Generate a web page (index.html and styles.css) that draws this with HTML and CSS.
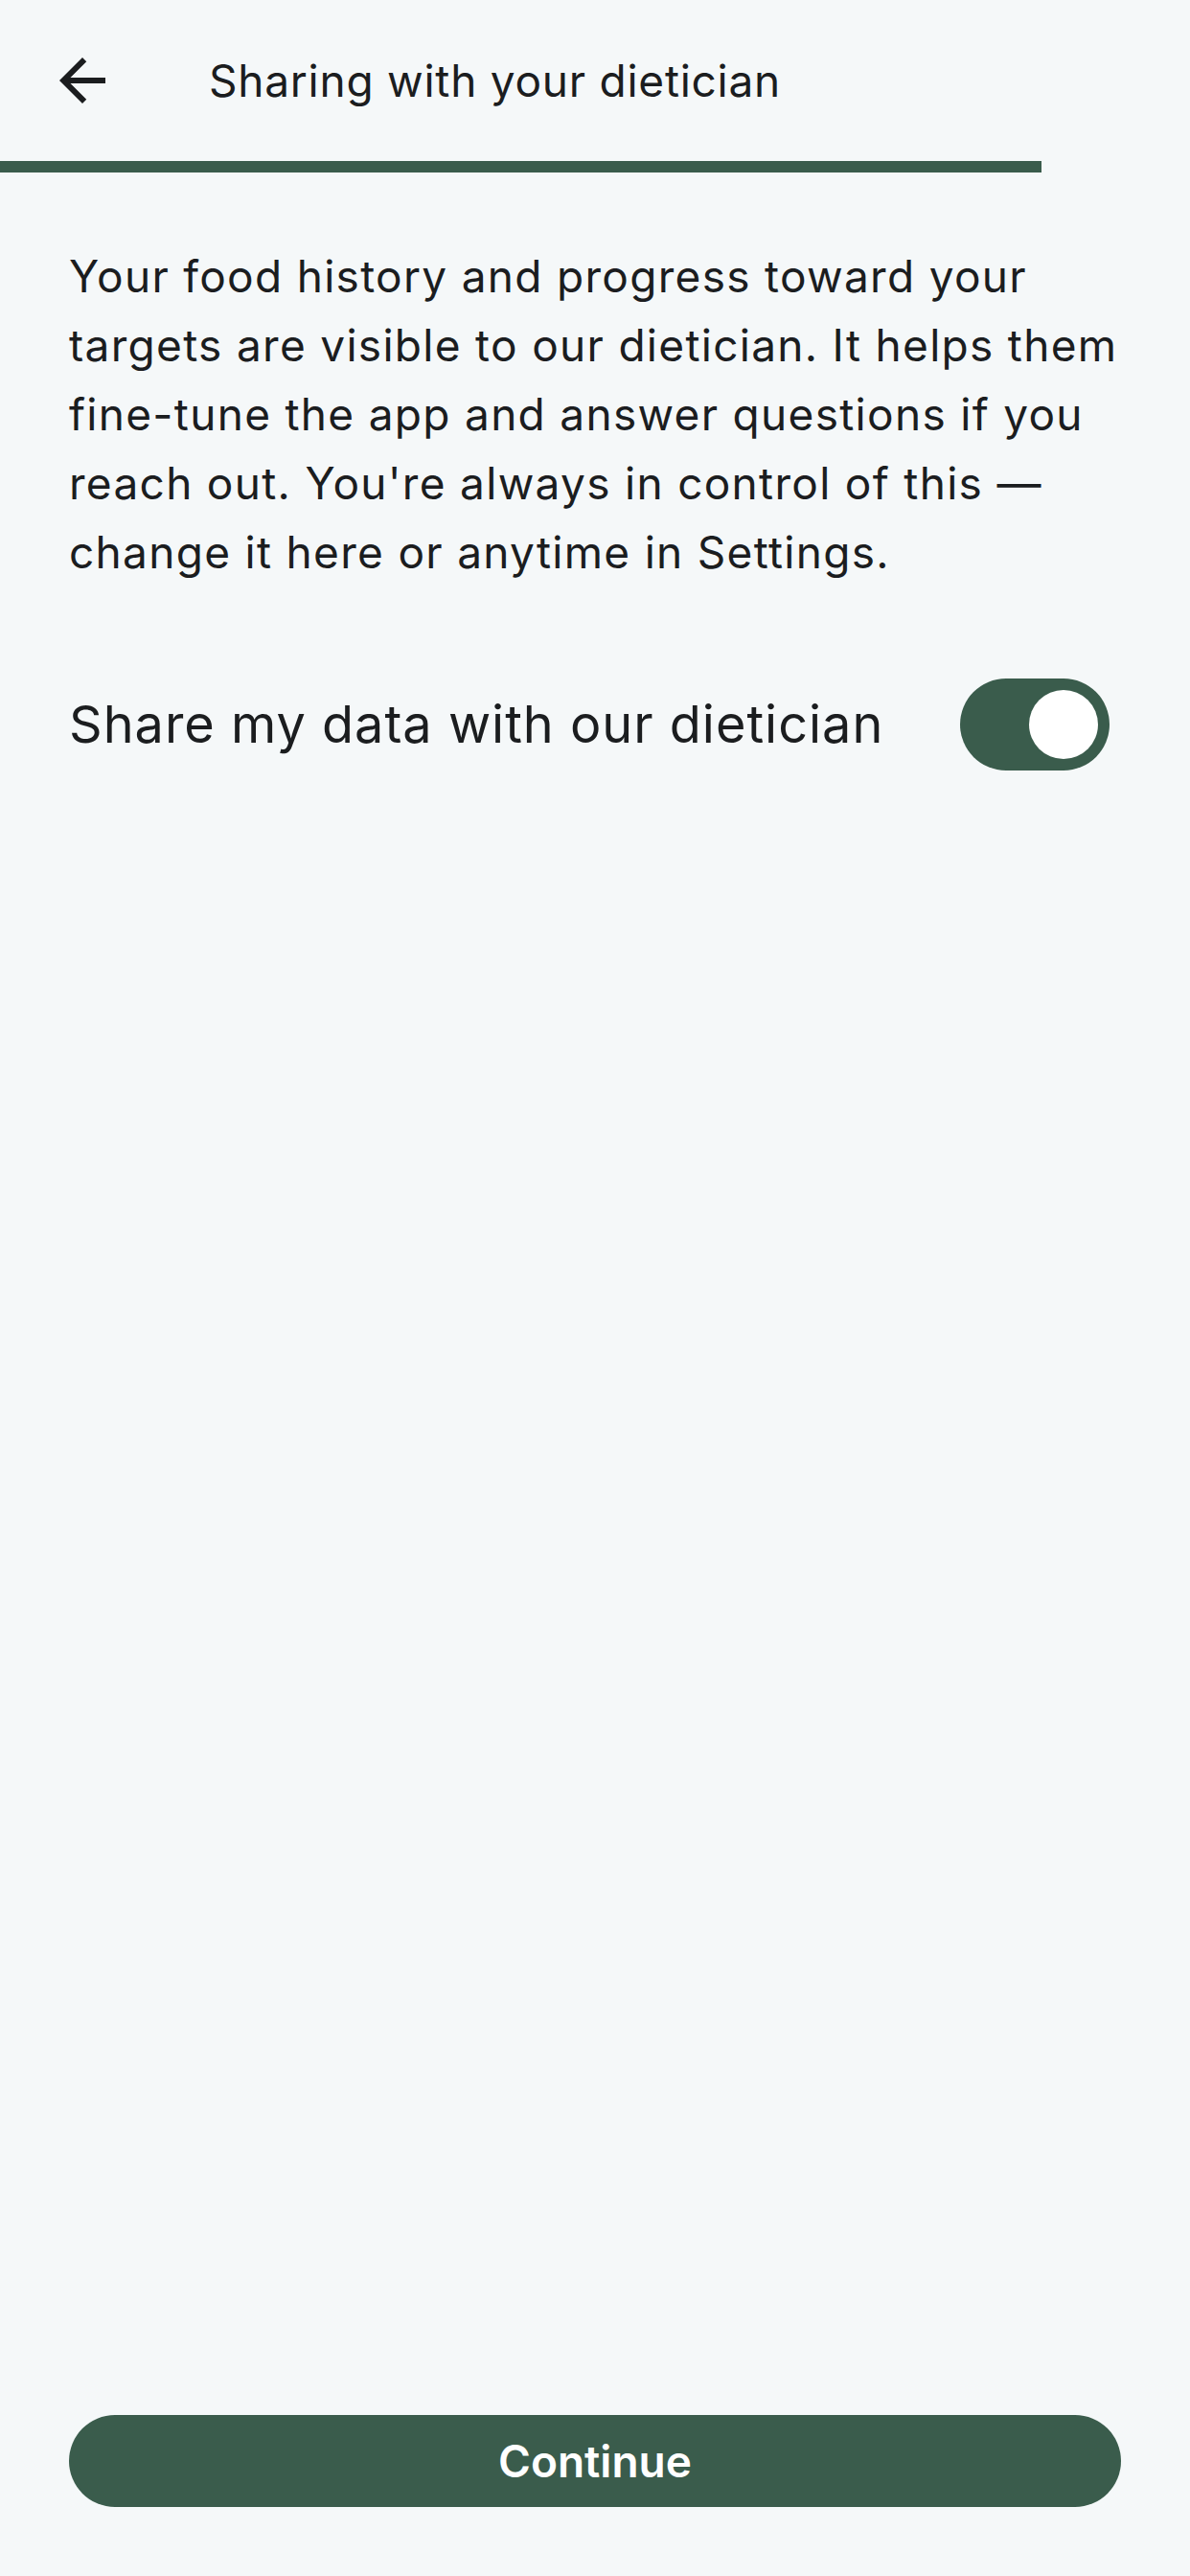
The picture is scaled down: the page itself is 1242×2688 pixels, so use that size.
FILE: index.html
```html
<!DOCTYPE html>
<html lang="en">
<head>
<meta charset="utf-8">
<title>Sharing with your dietician</title>
<link rel="stylesheet" href="styles.css">
</head>
<body>
<div class="screen">
  <header class="top-bar">
    <button class="back-btn" aria-label="Back">
      <svg class="back-icon" viewBox="0 0 24 24" width="72" height="72"><path d="M20 11H7.83l5.59-5.59L12 4l-8 8 8 8 1.41-1.41L7.83 13H20v-2z"/></svg>
    </button>
    <h1 class="title">Sharing with your dietician</h1>
  </header>
  <div class="progress"><div class="progress-fill"></div></div>
  <main class="content">
    <p class="intro">Your food history and progress toward your targets are visible to our dietician. It helps them fine-tune the app and answer questions if you reach out. You're always in control of this — change it here or anytime in Settings.</p>
    <div class="toggle-row">
      <span class="toggle-label">Share my data with our dietician</span>
      <span class="switch"><span class="thumb"></span></span>
    </div>
  </main>
  <div class="footer">
    <button class="continue-btn">Continue</button>
  </div>
</div>
</body>
</html>
```
FILE: styles.css
```css
html, body {
  margin: 0;
  padding: 0;
  background: #f5f8f9;
}
body {
  font-family: Inter, "Noto Sans", sans-serif;
  color: #1b1d1f;
}
.screen {
  min-height: 100vh;
  display: flex;
  flex-direction: column;
}
.top-bar {
  height: 168px;
  display: flex;
  align-items: center;
  padding-left: 50px;
  gap: 96px;
  box-sizing: border-box;
}
.back-btn {
  border: 0;
  background: none;
  padding: 0;
  width: 72px;
  height: 72px;
  display: flex;
}
.back-icon {
  fill: #1b1d1f;
}
.title {
  margin: 0;
  font-size: 46px;
  font-weight: 400;
  letter-spacing: 0.75px;
}
.progress {
  height: 12px;
}
.progress-fill {
  width: 87.5%;
  height: 100%;
  background: #3a5c4c;
}
.content {
  padding: 72px 72px 0;
  flex: 1;
}
.intro {
  margin: 0;
  font-size: 46px;
  line-height: 72px;
  letter-spacing: 1.3px;
}
.toggle-row {
  margin-top: 96px;
  height: 96px;
  display: flex;
  align-items: center;
  justify-content: space-between;
  padding-right: 12px;
}
.toggle-label {
  font-size: 54px;
  line-height: 96px;
  letter-spacing: 1px;
}
.switch {
  width: 156px;
  height: 96px;
  border-radius: 48px;
  background: #3a5c4c;
  display: flex;
  align-items: center;
  justify-content: flex-end;
  padding: 0 12px;
  box-sizing: border-box;
}
.thumb {
  width: 72px;
  height: 72px;
  border-radius: 50%;
  background: #ffffff;
}
.footer {
  padding: 0 72px 72px;
}
.continue-btn {
  width: 100%;
  height: 96px;
  border: 0;
  border-radius: 48px;
  background: #3a5c4c;
  color: #ffffff;
  font-family: Inter, "Noto Sans", sans-serif;
  font-size: 46px;
  font-weight: 600;
}
```
